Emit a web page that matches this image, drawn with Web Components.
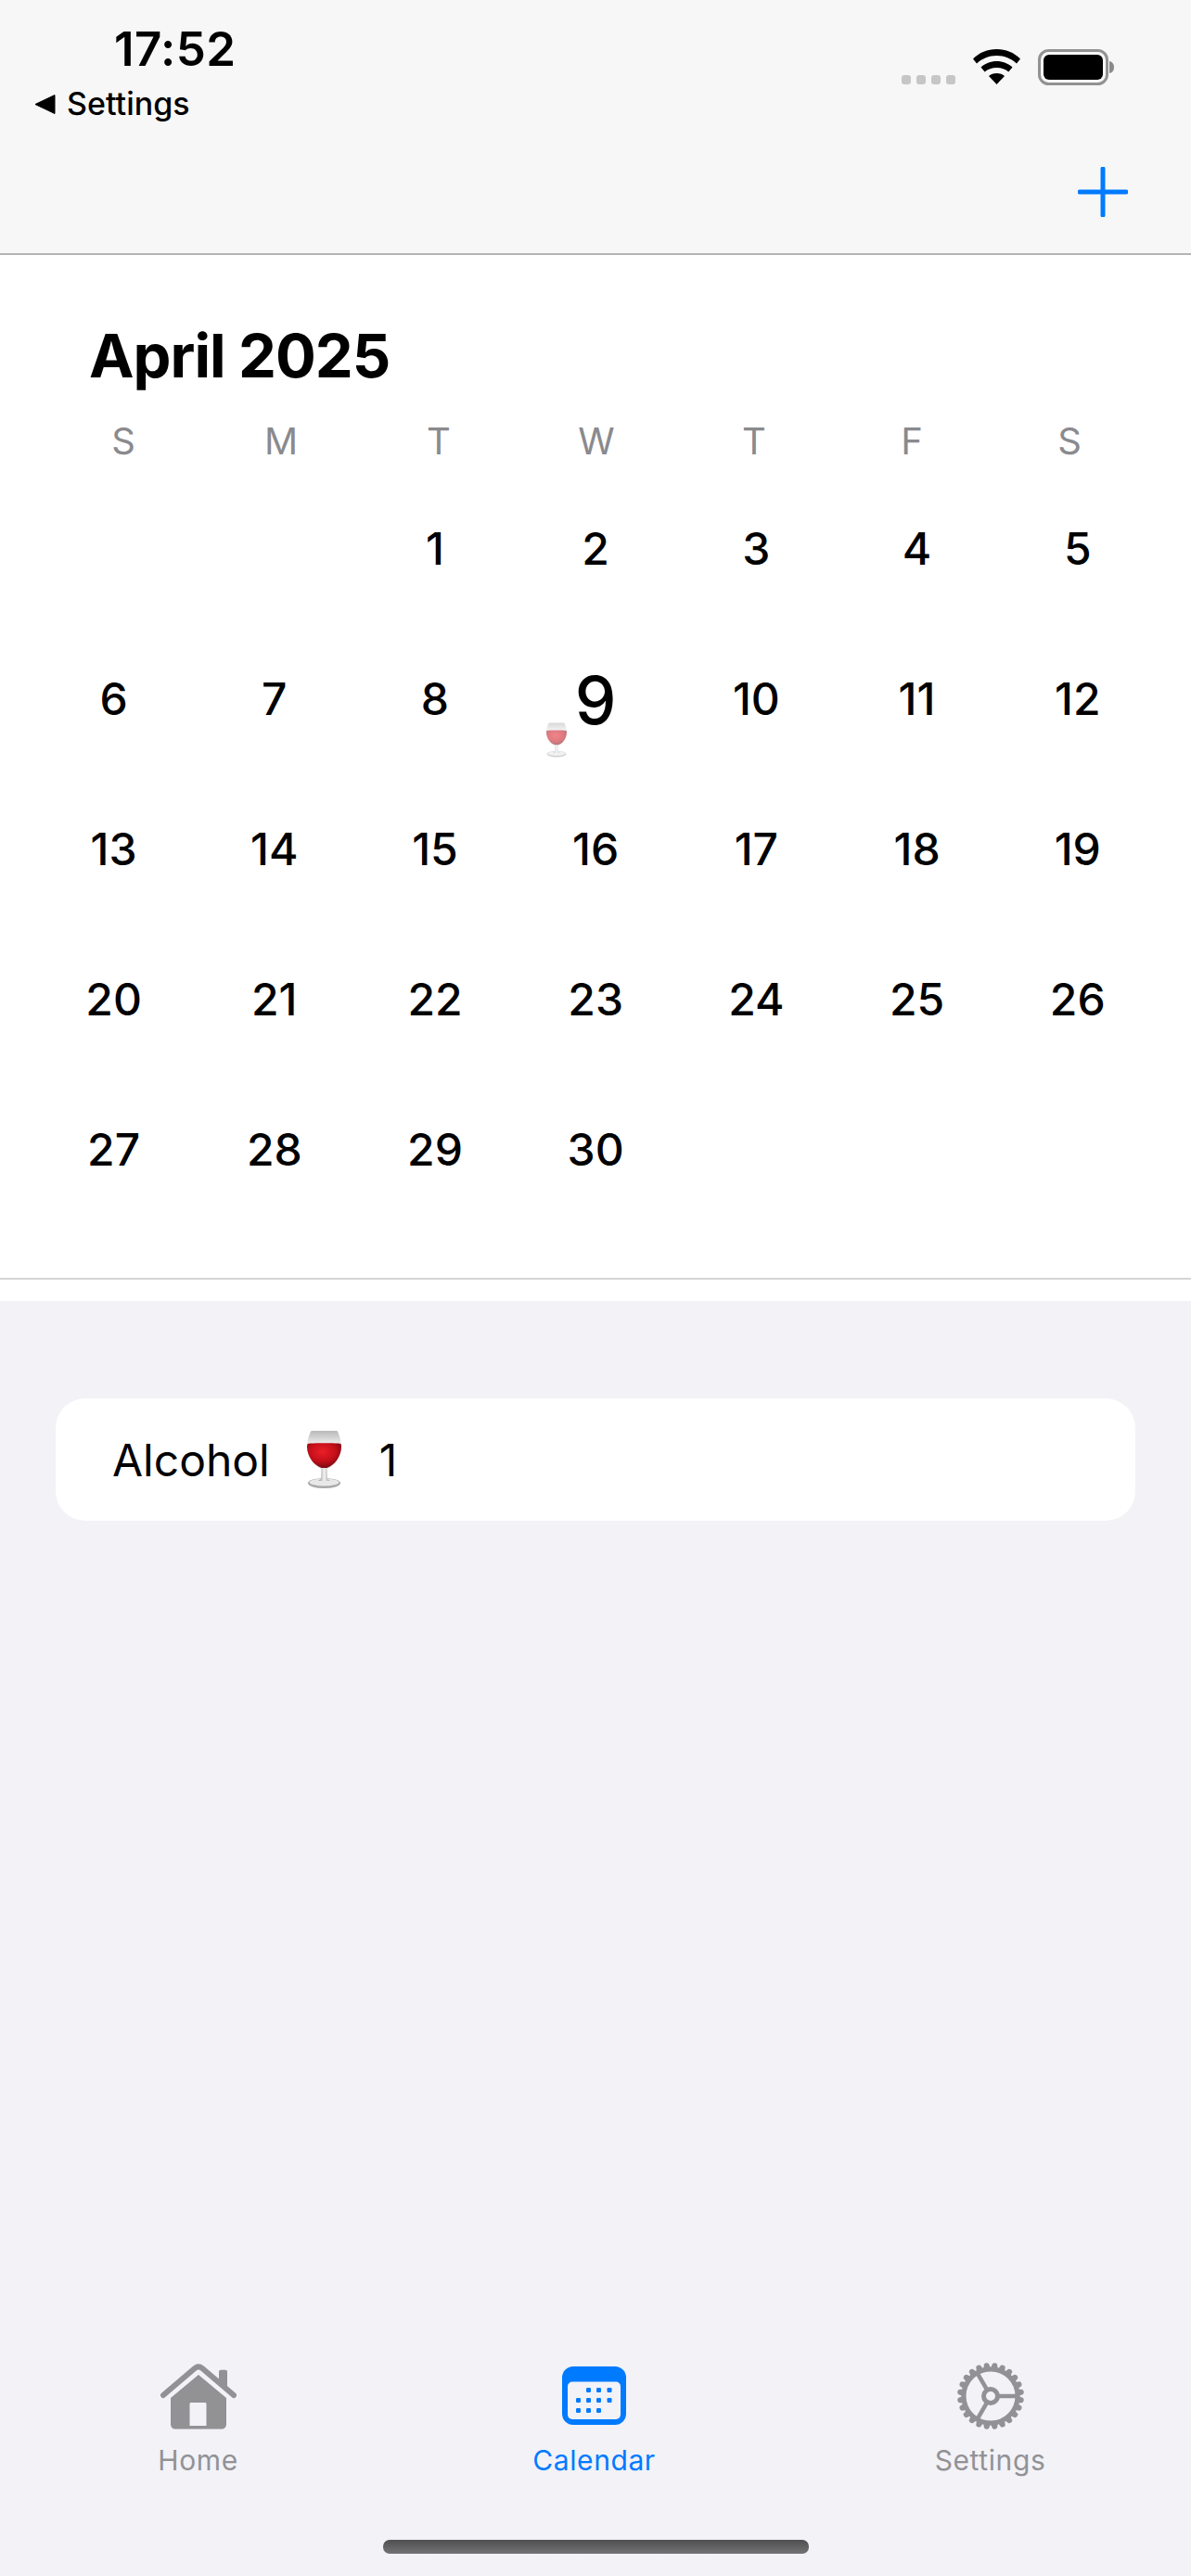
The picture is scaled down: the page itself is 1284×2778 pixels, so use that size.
<!DOCTYPE html>
<html lang="en">
<head>
<meta charset="utf-8">
<title>Calendar</title>
<style>
  html, body {
    margin: 0;
    height: 100%;
    background: #f2f2f7;
    font-family: Inter, "Liberation Sans", sans-serif;
  }
  body {
    display: flex;
    flex-direction: column;
    height: 2778px;
    overflow: hidden;
  }
  log-list { flex: 1; }
</style>
</head>
<body>
<nav-header></nav-header>
<month-calendar month="April 2025" first-day="2" days="30" selected="9"></month-calendar>
<log-list>
  <log-row label="Alcohol" count="1"></log-row>
</log-list>
<tab-bar></tab-bar>

<script>
// shared wine glass drawing, used in the log row and as the day marker
let wineIds = 0;
function wineGlass(width, height) {
  const id = 'wine' + (++wineIds);
  return `
    <svg width="${width}" height="${height}" viewBox="0 0 37 62" aria-label="wine glass">
      <defs>
        <radialGradient id="${id}-wine" cx=".45" cy=".35" r=".7">
          <stop offset="0" stop-color="#ea1f28"/>
          <stop offset=".55" stop-color="#c40f1a"/>
          <stop offset="1" stop-color="#6d0710"/>
        </radialGradient>
        <linearGradient id="${id}-bowl" x1="0" y1="0" x2="0" y2="1">
          <stop offset="0" stop-color="#b8b8b8"/>
          <stop offset=".35" stop-color="#eeeeee"/>
          <stop offset="1" stop-color="#dddddd"/>
        </linearGradient>
        <linearGradient id="${id}-stem" x1="0" y1="0" x2="1" y2="0">
          <stop offset="0" stop-color="#8f8f8f"/>
          <stop offset=".5" stop-color="#f2f2f2"/>
          <stop offset="1" stop-color="#9c9c9c"/>
        </linearGradient>
      </defs>
      <ellipse cx="18.500" cy="56.500" rx="17.500" ry="5.500" fill="#a9a9a9"/>
      <ellipse cx="18.500" cy="55.500" rx="16" ry="4" fill="#e8e8e8"/>
      <path d="M15.500 38h6l.4 12c.1 2 1.100 3 3.100 4h-13c2-1 3-2 3.100-4z" fill="url(#${id}-stem)"/>
      <path d="M5.500 0h26c.8 0 1.300.4 1.600 1.100 2.600 6 3.900 11 3.900 15.900C37 28 30 38 21.500 41h-6C7 38 0 28 0 17 0 12.100 1.300 7.100 3.900 1.100 4.200.4 4.700 0 5.500 0z" fill="url(#${id}-bowl)"/>
      <path d="M.6 14c4-.6 8-.7 18-.7s14 .1 17.800.7c.5 1.100.6 2 .6 3C37 27.500 30 37 21.500 40h-6C7 37 0 27.500 0 17c0-1 .2-2 .6-3z" fill="url(#${id}-wine)"/>
    </svg>`;
}

class NavHeader extends HTMLElement {
  constructor() {
    super();
    this.attachShadow({ mode: 'open' });
    this.shadowRoot.innerHTML = `
      <style>
        :host {
          display: block;
          height: 273px;
          background: #f7f7f7;
          border-bottom: 2px solid #b4b4b4;
          color: #000;
        }
        .status {
          display: flex;
          justify-content: space-between;
          height: 180px;
        }
        .left {
          padding: 23px 0 0 38px;
        }
        .time {
          font-size: 51px;
          font-weight: 600;
          letter-spacing: .4px;
          line-height: 60px;
          margin-left: 85px;
        }
        .back {
          display: flex;
          align-items: center;
          gap: 12px;
          font-size: 34px;
          font-weight: 500;
          line-height: 40px;
          margin-top: 9px;
        }
        .icons {
          display: flex;
          align-items: flex-start;
          padding: 53px 82px 0 0;
        }
        .dots { display: flex; gap: 6px; margin: 28px 19px 0 0; }
        .dots i {
          width: 10px;
          height: 10px;
          border-radius: 3px;
          background: #c6c6c6;
        }
        .wifi { margin-right: 19px; }
        .actions {
          display: flex;
          justify-content: flex-end;
          padding-right: 68px;
        }
      </style>
      <div class="status">
        <div class="left">
          <div class="time">17:52</div>
          <div class="back">
            <svg width="22" height="21" viewBox="0 0 22 21"><path d="M0 10.500 21 0.500v20z" fill="#000" stroke="#000" stroke-linejoin="round"/></svg>
            <span>Settings</span>
          </div>
        </div>
        <div class="icons">
          <div class="dots"><i></i><i></i><i></i><i></i></div>
          <svg class="wifi" width="51" height="38" viewBox="0 0 51 38">
            <path d="M25.500 0C15.500 0 7 3.500 0 10.500l4 5C10 10 17 7 25.500 7S41 10 47 15.500l4-5C44 3.500 35.500 0 25.500 0z"/>
            <path d="M25.500 13c-6.500 0-12.500 2.500-17 6.500l4.200 5c3.300-3 7.700-4.500 12.800-4.500s9.500 1.500 12.800 4.500l4.200-5c-4.500-4-10.500-6.500-17-6.500z"/>
            <path d="M25.500 26c-3.500 0-6.500 1.200-8.500 3l8.500 9 8.500-9c-2-1.800-5-3-8.500-3z"/>
          </svg>
          <svg width="83" height="40" viewBox="0 0 83 40">
            <rect x="1.500" y="1.500" width="73" height="36" rx="10" fill="none" stroke="#929292" stroke-width="3"/>
            <rect x="6" y="6" width="64" height="27" rx="6" fill="#000"/>
            <path d="M77 13c3 .5 5 3 5 6.500S80 25.500 77 26z" fill="#8a8a8a"/>
          </svg>
        </div>
      </div>
      <div class="actions">
        <svg width="54" height="54" viewBox="0 0 54 54">
          <path d="M27 2v50M2 27h50" stroke="#007aff" stroke-width="5" stroke-linecap="round" fill="none"/>
        </svg>
      </div>
    `;
  }
}

class DayCell extends HTMLElement {
  constructor() {
    super();
    this.attachShadow({ mode: 'open' });
  }

  connectedCallback() {
    const marked = this.hasAttribute('marked');
    this.shadowRoot.innerHTML = `
      <style>
        :host {
          display: flex;
          align-items: center;
          justify-content: center;
          position: relative;
          height: 162px;
          font-size: 48px;
          font-weight: 450;
          color: #000;
        }
        :host([selected]) { font-size: 71px; padding-top: 3px; box-sizing: border-box; }
        .mark {
          position: absolute;
          left: 33px;
          top: 107px;
          opacity: .55;
          filter: blur(.5px);
          line-height: 0;
        }
      </style>
      <slot></slot>
      ${marked ? `<span class="mark">${wineGlass(22, 38)}</span>` : ''}
    `;
  }
}

class MonthCalendar extends HTMLElement {
  constructor() {
    super();
    this.attachShadow({ mode: 'open' });
  }

  connectedCallback() {
    const firstDay = Number(this.getAttribute('first-day'));
    const days = Number(this.getAttribute('days'));
    const selected = Number(this.getAttribute('selected'));
    const labels = ['S', 'M', 'T', 'W', 'T', 'F', 'S'];

    let cells = '';
    for (let i = 0; i < firstDay; i++) cells += '<span></span>';
    for (let d = 1; d <= days; d++) {
      const attr = d === selected ? 'selected marked' : '';
      cells += `<day-cell ${attr}>${d}</day-cell>`;
    }

    this.shadowRoot.innerHTML = `
      <style>
        :host {
          display: block;
          background: #fff;
          height: 1128px;
        }
        .frame {
          height: 1105px;
          box-sizing: border-box;
          border-bottom: 2px solid #d4d4d6;
        }
        h1 {
          margin: 0;
          padding: 71px 0 0 96px;
          font-size: 65px;
          letter-spacing: -1px;
          line-height: 76px;
          font-weight: 700;
        }
        .labels, .days { display: grid; }
        .labels {
          grid-template-columns: repeat(7, 170px);
          padding-left: 48px;
          font-size: 40px;
          line-height: 48px;
          color: #8a8a8e;
          text-align: center;
          margin-top: 30px;
        }
        .days {
          grid-template-columns: repeat(7, 173.200px);
          padding-left: 36px;
          margin-top: 10px;
        }
      </style>
      <div class="frame">
        <h1>${this.getAttribute('month')}</h1>
        <div class="labels">${labels.map(l => `<span>${l}</span>`).join('')}</div>
        <div class="days">${cells}</div>
      </div>
    `;
  }
}

class LogList extends HTMLElement {
  constructor() {
    super();
    this.attachShadow({ mode: 'open' });
    this.shadowRoot.innerHTML = `
      <style>
        :host {
          display: flex;
          flex-direction: column;
          gap: 20px;
          padding: 105px 60px 0;
        }
      </style>
      <slot></slot>
    `;
  }
}

class LogRow extends HTMLElement {
  constructor() {
    super();
    this.attachShadow({ mode: 'open' });
  }

  connectedCallback() {
    this.shadowRoot.innerHTML = `
      <style>
        :host {
          display: flex;
          align-items: center;
          height: 132px;
          padding-left: 61px;
          background: #fff;
          border-radius: 32px;
          font-size: 48px;
          color: #000;
        }
        .glass { display: flex; margin: 0 41px 0 40px; }
      </style>
      <span>${this.getAttribute('label')}</span>
      <span class="glass">${wineGlass(37, 62)}</span>
      <span>${this.getAttribute('count')}</span>
    `;
  }
}

class TabBar extends HTMLElement {
  constructor() {
    super();
    this.attachShadow({ mode: 'open' });
    this.shadowRoot.innerHTML = `
      <style>
        :host {
          display: block;
          height: 262px;
          background: #f2f2f7;
        }
        .tabs {
          display: grid;
          grid-template-columns: repeat(3, 427px);
          padding-top: 30px;
        }
        .tab {
          display: flex;
          flex-direction: column;
          align-items: center;
          font-size: 30px;
          font-weight: 400;
          letter-spacing: .6px;
          line-height: 36px;
          color: #929295;
        }
        .tab.active { color: #007aff; }
        .icon { height: 76px; display: flex; align-items: center; margin-bottom: 13px; }
        .indicator {
          width: 459px;
          height: 15px;
          margin: 68px auto 0;
          border-radius: 7px;
          background: linear-gradient(#4f4f51, #737375);
        }
      </style>
      <div class="tabs">
        <div class="tab">
          <div class="icon">
            <svg width="82" height="72" viewBox="0 0 82 72" fill="#929295">
              <path d="M3 35 37 6c2.500-2 5.500-2 8 0l34 29" fill="none" stroke="#929295" stroke-width="6" stroke-linecap="round" stroke-linejoin="round"/>
              <path d="M63 21V10c0-1.500 .8-2.300 2.300-2.300h4.400c1.500 0 2.300 .8 2.300 2.300v19z"/>
              <path fill-rule="evenodd" d="M41 13 71 38v28c0 3.500-2 5.500-5.500 5.500h-49C13 71.500 11 69.500 11 66V38zM31.500 44.500v23.500h18V44.500c0-1-.5-1.500-1.500-1.500H33c-1 0-1.500.5-1.500 1.500z"/>
            </svg>
          </div>
          <span>Home</span>
        </div>
        <div class="tab active">
          <div class="icon">
            <svg width="70" height="64" viewBox="0 0 70 64">
              <rect width="69" height="63" rx="12" fill="#007aff"/>
              <rect x="6" y="16.500" width="57" height="40.500" rx="5" fill="#f2f2f7"/>
              <g fill="#007aff">
                <rect x="26" y="23" width="5" height="5" rx="1.200"/><rect x="37" y="23" width="5" height="5" rx="1.200"/><rect x="48.500" y="23" width="5" height="5" rx="1.200"/>
                <rect x="15" y="34" width="5" height="5" rx="1.200"/><rect x="26" y="34" width="5" height="5" rx="1.200"/><rect x="37" y="34" width="5" height="5" rx="1.200"/><rect x="48.500" y="34" width="5" height="5" rx="1.200"/>
                <rect x="15" y="45" width="5" height="5" rx="1.200"/><rect x="26" y="45" width="5" height="5" rx="1.200"/><rect x="37" y="45" width="5" height="5" rx="1.200"/>
              </g>
            </svg>
          </div>
          <span>Calendar</span>
        </div>
        <div class="tab">
          <div class="icon">
            <svg id="gear" width="76" height="76" viewBox="0 0 76 76" fill="none" stroke="#929295"></svg>
          </div>
          <span>Settings</span>
        </div>
      </div>
      <div class="indicator"></div>
    `;
    this.drawGear(this.shadowRoot.getElementById('gear'));
  }

  // 24 teeth around the rim, three spokes meeting at the hub
  drawGear(svg) {
    let teeth = '';
    for (let i = 0; i < 24; i++) {
      const a = (i + 0.5) * 15;
      teeth += `<path d="M33.500 10 35.500 3c1.500-1.400 3.500-1.400 5 0l2 7z" fill="#929295" stroke="none" transform="rotate(${a} 38 38)"/>`;
    }
    const spokes = [0, 120, 240].map(a =>
      `<line x1="47" y1="38" x2="66" y2="38" transform="rotate(${a} 38 38)" stroke-width="4.500"/>`).join('');
    svg.innerHTML = `${teeth}
      <circle cx="38" cy="38" r="29" stroke-width="5"/>
      ${spokes}
      <circle cx="38" cy="38" r="7.500" stroke-width="5"/>`;
  }
}

customElements.define('nav-header', NavHeader);
customElements.define('day-cell', DayCell);
customElements.define('month-calendar', MonthCalendar);
customElements.define('log-list', LogList);
customElements.define('log-row', LogRow);
customElements.define('tab-bar', TabBar);
</script>
</body>
</html>
